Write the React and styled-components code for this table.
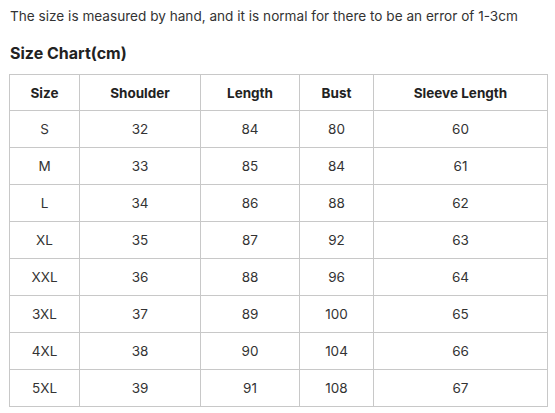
import React from "react";
import styled, { createGlobalStyle } from "styled-components";

const Global = createGlobalStyle`
  html, body { margin: 0; padding: 0; background: #fff; }
  body { font-family: Inter, "Noto Sans", sans-serif; color: #333; }
`;

const Page = styled.div`
  padding: 6px 8px 0 9px;
`;

const Note = styled.p`
  margin: 0 0 0 1px;
  font-size: 13.6px;
  line-height: 20px;
  color: #333;
`;

const Title = styled.h3`
  margin: 15px 0 0 1px;
  font-size: 16px;
  line-height: 24px;
  font-weight: 700;
  color: #222;
`;

const Table = styled.table`
  margin-top: 9px;
  width: 538px;
  border-collapse: collapse;
  table-layout: fixed;
  font-size: 13.5px;
`;

const Th = styled.th`
  border: 1px solid #c8c8c8;
  height: 35px;
  padding: 0;
  font-weight: 700;
  color: #222;
  text-align: center;
`;

const Td = styled.td`
  border: 1px solid #c8c8c8;
  height: 36px;
  padding: 0;
  color: #333;
  text-align: center;
`;

const cols = [
  { label: "Size", w: 70 },
  { label: "Shoulder", w: 121 },
  { label: "Length", w: 99 },
  { label: "Bust", w: 74 },
  { label: "Sleeve Length", w: 174 },
];

const rows = [
  ["S", 32, 84, 80, 60],
  ["M", 33, 85, 84, 61],
  ["L", 34, 86, 88, 62],
  ["XL", 35, 87, 92, 63],
  ["XXL", 36, 88, 96, 64],
  ["3XL", 37, 89, 100, 65],
  ["4XL", 38, 90, 104, 66],
  ["5XL", 39, 91, 108, 67],
];

export default function App() {
  return (
    <Page>
      <Global />
      <Note>The size is measured by hand, and it is normal for there to be an error of 1-3cm</Note>
      <Title>Size Chart(cm)</Title>
      <Table>
        <colgroup>
          {cols.map((c) => (
            <col key={c.label} style={{ width: c.w }} />
          ))}
        </colgroup>
        <thead>
          <tr>
            {cols.map((c) => (
              <Th key={c.label}>{c.label}</Th>
            ))}
          </tr>
        </thead>
        <tbody>
          {rows.map((r) => (
            <tr key={r[0]}>
              {r.map((v, i) => (
                <Td key={i}>{v}</Td>
              ))}
            </tr>
          ))}
        </tbody>
      </Table>
    </Page>
  );
}
